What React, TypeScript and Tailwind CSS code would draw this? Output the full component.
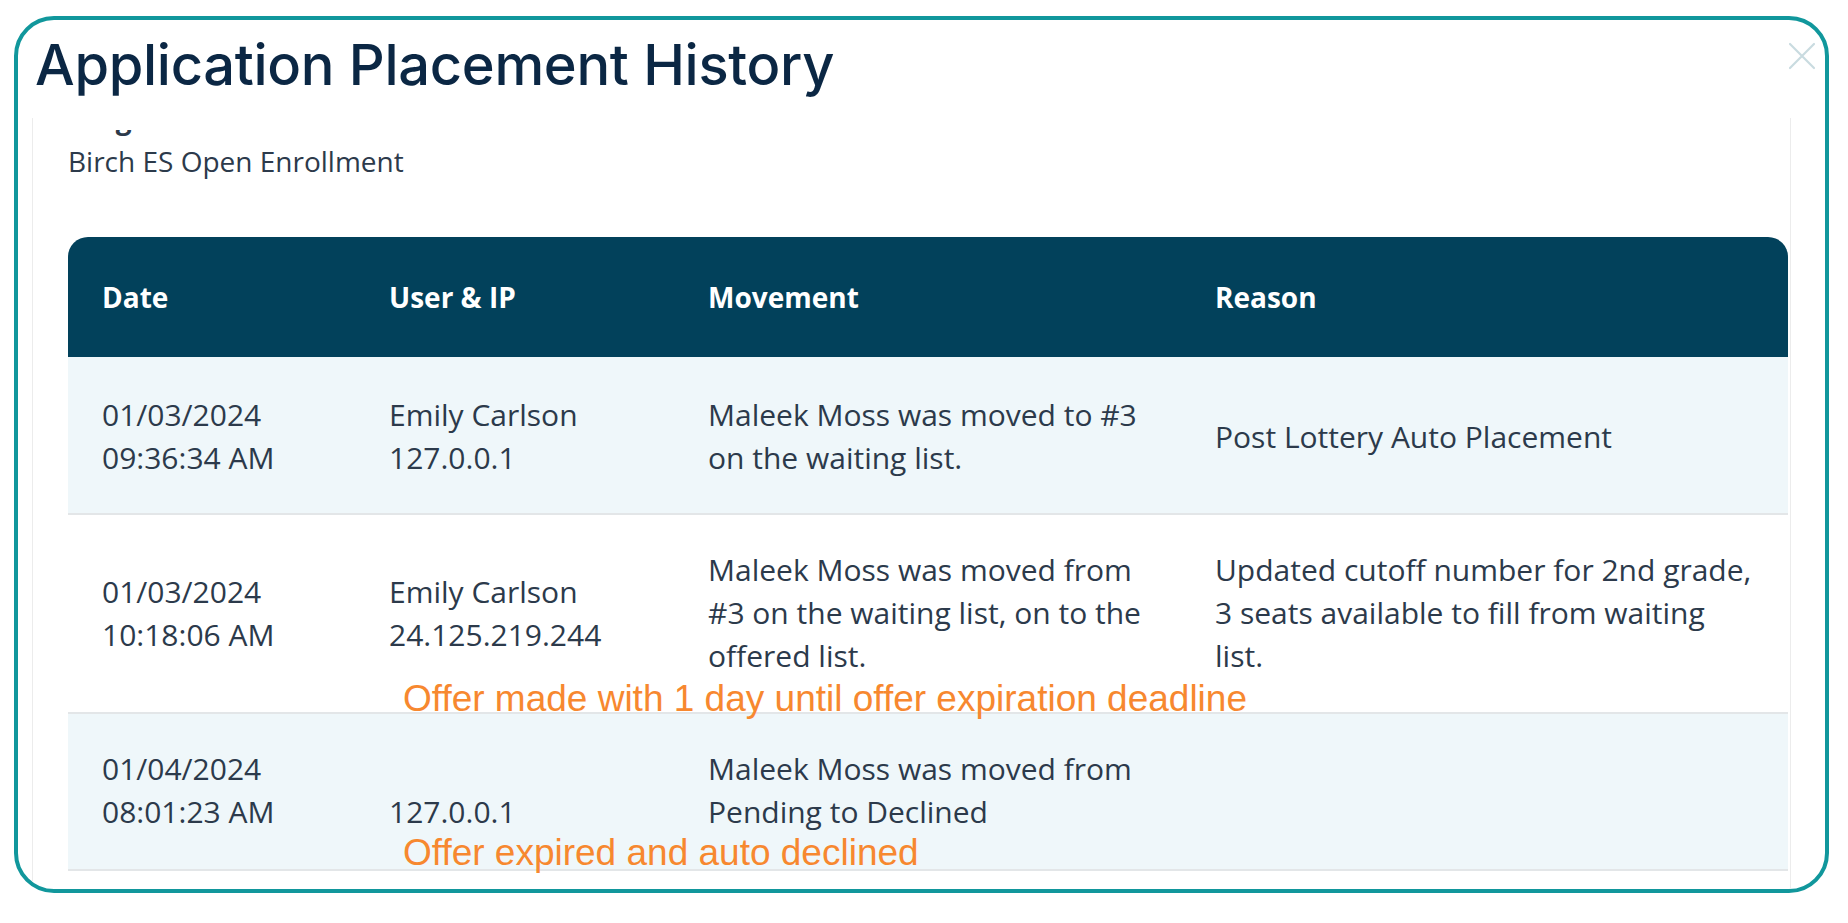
import React from "react";

const rows = [
  {
    date: ["01/03/2024", "09:36:34 AM"],
    user: ["Emily Carlson", "127.0.0.1"],
    movement: ["Maleek Moss was moved to #3", "on the waiting list."],
    reason: ["Post Lottery Auto Placement"],
    note: "",
    noteClass: "",
    light: true,
  },
  {
    date: ["01/03/2024", "10:18:06 AM"],
    user: ["Emily Carlson", "24.125.219.244"],
    movement: ["Maleek Moss was moved from", "#3 on the waiting list, on to the", "offered list."],
    reason: ["Updated cutoff number for 2nd grade,", "3 seats available to fill from waiting", "list."],
    note: "Offer made with 1 day until offer expiration deadline",
    noteClass: "mt-[3px] h-[32px]",
    light: false,
  },
  {
    date: ["01/04/2024", "08:01:23 AM"],
    user: ["\u00a0", "127.0.0.1"],
    movement: ["Maleek Moss was moved from", "Pending to Declined"],
    reason: [],
    note: "Offer expired and auto declined",
    noteClass: "mt-[1px] h-[35px]",
    light: true,
  },
];

function Cell({ lines }: { lines: string[] }) {
  return (
    <div className="pl-[34px]">
      {lines.map((l, i) => (
        <div key={i} className="whitespace-nowrap">
          {l}
        </div>
      ))}
    </div>
  );
}

export default function App() {
  return (
    <div className="w-[1848px] h-[923px] bg-white pt-[16px] pl-[14px]">
      <div className="relative w-[1815px] h-[877px] rounded-[40px] border-4 border-[#11979c] overflow-hidden flex flex-col bg-white">
        <div className="h-[98px] shrink-0 pl-[17px] pt-[15px]">
          <h1 className="font-['Inter',sans-serif] font-medium text-[56px] leading-[60px] text-[#0b2744] tracking-[-0.3px]">
            Application Placement History
          </h1>
        </div>
        <button className="absolute right-[9px] top-[22px] w-[28px] h-[28px]" aria-label="Close">
          <svg width="28" height="28" viewBox="0 0 28 28" fill="none">
            <path d="M2 2 L26 26 M26 2 L2 26" stroke="#c9dbe0" strokeWidth="2.2" strokeLinecap="round" />
          </svg>
        </button>
        <div className="flex-1 min-h-0 ml-[14px] mr-[34px] border-x border-[#ececec] flex flex-col font-['Open_Sans',sans-serif] text-[#2c3a4b]">
          <div className="mt-[12px] flex-1 min-h-0 overflow-hidden">
            <div className="-mt-[30px] pl-[35px] pr-[2px]">
              <div className="font-bold text-[28px] leading-[36px]">Program</div>
              <div className="mt-[7px] text-[28px] leading-[36px]">Birch ES Open Enrollment</div>
              <div className="mt-[58px]">
                <div className="grid grid-cols-[287px_319px_507px_607px] h-[120px] items-center bg-[#02415b] rounded-t-[20px] text-white font-bold text-[28px]">
                  <div className="pl-[34px]">Date</div>
                  <div className="pl-[34px]">User &amp; IP</div>
                  <div className="pl-[34px]">Movement</div>
                  <div className="pl-[34px]">Reason</div>
                </div>
                {rows.map((r, i) => (
                  <div
                    key={i}
                    className={`border-b-2 border-[#e3e6e8] ${r.light ? "bg-[#eff7fa]" : "bg-white"} ${
                      i === 0 ? "pt-[36px] pb-[34px]" : "pt-[33px]"
                    }`}
                  >
                    <div className="grid grid-cols-[287px_319px_507px_607px] items-center text-[30px] leading-[43px]">
                      <Cell lines={r.date} />
                      <Cell lines={r.user} />
                      <Cell lines={r.movement} />
                      <Cell lines={r.reason} />
                    </div>
                    {r.note && (
                      <div
                        className={`${r.noteClass} pl-[335px] font-['Liberation_Sans',Arial,sans-serif] text-[37px] leading-[37px] text-[#f7882f] whitespace-nowrap`}
                      >
                        {r.note}
                      </div>
                    )}
                  </div>
                ))}
              </div>
            </div>
          </div>
        </div>
      </div>
    </div>
  );
}
